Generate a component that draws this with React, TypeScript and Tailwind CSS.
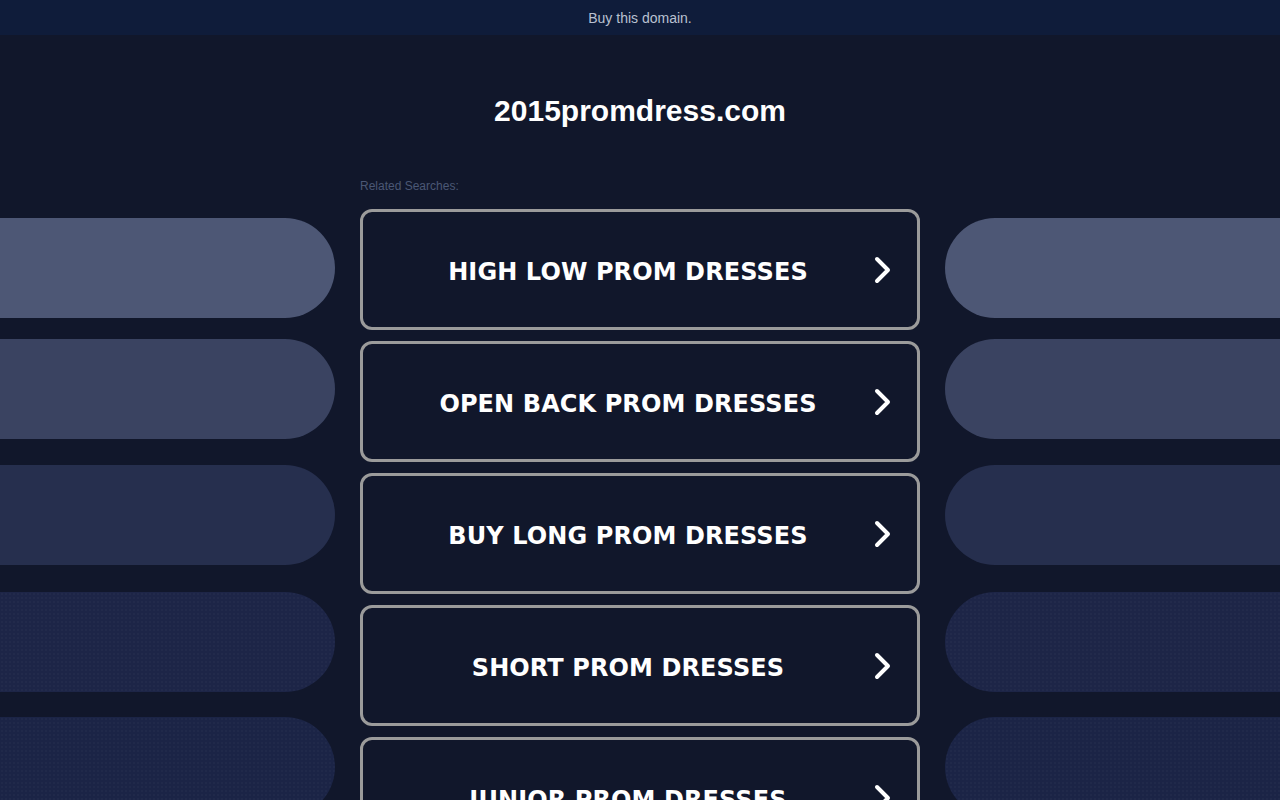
const searches = [
  "HIGH LOW PROM DRESSES",
  "OPEN BACK PROM DRESSES",
  "BUY LONG PROM DRESSES",
  "SHORT PROM DRESSES",
  "JUNIOR PROM DRESSES",
];

// side decoration pills, top offsets and tints follow the reference
const pills = [
  { mt: "mt-[40px]", bg: "bg-[#4d5775]" },
  { mt: "mt-[21px]", bg: "bg-[#3a4361]" },
  { mt: "mt-[26px]", bg: "bg-[#262f4e]" },
  { mt: "mt-[27px]", bg: "bg-[#1d2547] bg-[radial-gradient(circle,rgba(255,255,255,0.025)_1px,transparent_1px)] bg-[length:4px_4px]" },
  { mt: "mt-[25px]", bg: "bg-[#1b2446] bg-[radial-gradient(circle,rgba(255,255,255,0.025)_1px,transparent_1px)] bg-[length:4px_4px]" },
];

function Chevron() {
  return (
    <svg width="18" height="28" viewBox="0 0 18 28" fill="none">
      <polyline
        points="3,3 14,14 3,25"
        stroke="white"
        strokeWidth="4"
        strokeLinecap="round"
        strokeLinejoin="round"
      />
    </svg>
  );
}

function SideColumn({ side }: { side: "left" | "right" }) {
  return (
    <div className="flex flex-col">
      {pills.map((p, i) => (
        <div
          key={i}
          className={`${p.mt} ${p.bg} h-[100px] ${side === "left" ? "rounded-r-[50px]" : "rounded-l-[50px]"}`}
        />
      ))}
    </div>
  );
}

export default function App() {
  return (
    <div className="min-h-screen bg-[#11172b] overflow-hidden font-['Liberation_Sans',Arial,sans-serif]">
      {/* Top banner */}
      <div className="h-[35px] bg-[#0f1c3a] flex items-center justify-center pt-[2px]">
        <span className="text-[14px] text-[#b9c1d1]">Buy this domain.</span>
      </div>

      {/* Domain title */}
      <h1 className="mt-[58px] text-center text-white font-bold text-[30px] leading-[36px]">
        2015promdress.com
      </h1>

      {/* Related searches */}
      <div className="mt-[49px] grid grid-cols-[335px_560px_335px] gap-x-[25px] pb-10">
        <SideColumn side="left" />

        <div className="flex flex-col">
          <p className="mt-[1px] text-[12px] leading-[15px] text-[#4b5775]">Related Searches:</p>
          <div className="mt-[15px] flex flex-col gap-[11px]">
            {searches.map((s) => (
              <a
                key={s}
                href="#"
                className="relative h-[121px] rounded-[12px] border-[3px] border-[#9b9b9b] flex items-center justify-center pr-[24px] pt-[4px]"
              >
                <span className="text-white font-bold text-[24px] tracking-[0.1px] font-['DejaVu_Sans',Verdana,sans-serif]">
                  {s}
                </span>
                <span className="absolute right-[25px] top-1/2 -translate-y-1/2 flex">
                  <Chevron />
                </span>
              </a>
            ))}
          </div>
        </div>

        <SideColumn side="right" />
      </div>
    </div>
  );
}
